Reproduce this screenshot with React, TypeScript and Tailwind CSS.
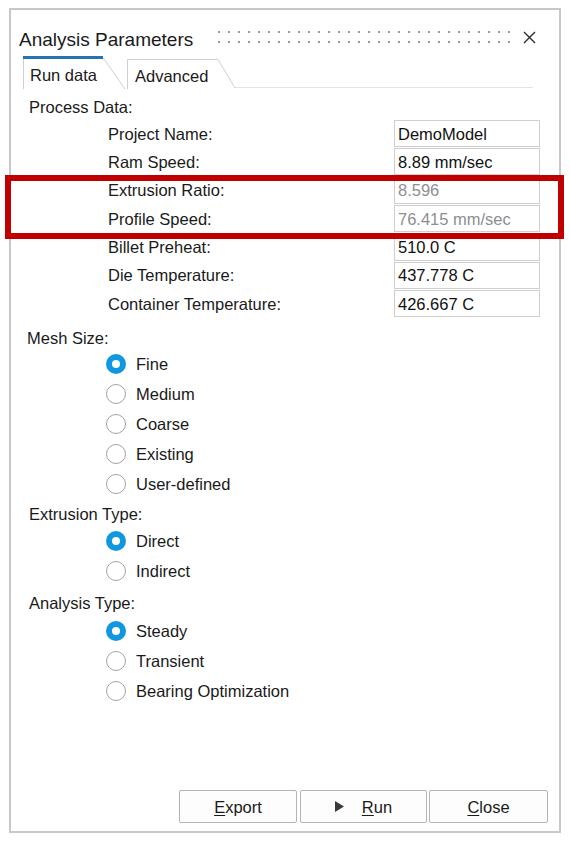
import React from "react";

const font = { fontFamily: '"Liberation Sans", Arial, sans-serif' };

function Radio({ label, checked }: { label: string; checked?: boolean }) {
  return (
    <div className="flex h-[30px] items-center pl-[95px]">
      {checked ? (
        <span className="flex h-[20px] w-[20px] items-center justify-center rounded-full bg-[#0f97df]">
          <span className="h-[8px] w-[8px] rounded-full bg-white" />
        </span>
      ) : (
        <span className="h-[20px] w-[20px] rounded-full border-[1.5px] border-[#a3a3a3] bg-white" />
      )}
      <span className="ml-[10px] text-[16.5px] leading-[20px] text-[#1a1a1a]">{label}</span>
    </div>
  );
}

function Field({ label, value, disabled }: { label: string; value: string; disabled?: boolean }) {
  return (
    <div className="flex h-[27px] items-center">
      <div className="w-[383px] pl-[97px] text-[16.5px] leading-[20px] text-[#1a1a1a]">{label}</div>
      <div
        className={
          "flex h-[27px] w-[146px] items-center border border-[#cfcfcf] bg-white pl-[3px] text-[16.5px] leading-[20px] " +
          (disabled ? "text-[#8e8e8e]" : "text-[#111111]")
        }
      >
        {value}
      </div>
    </div>
  );
}

export default function App() {
  const dots = Array.from({ length: 30 });
  return (
    <div className="relative h-[841px] w-[570px] bg-white pl-[9px] pt-[8px]" style={font}>
      <div className="flex h-[825px] w-[552px] flex-col border-2 border-[#c8c8c8] bg-white">
        {/* Title row */}
        <div className="mt-[18px] flex h-[24px] items-start">
          <div className="w-[207px] pl-[8px] text-[19px] leading-[24px] text-[#1a1a1a]">Analysis Parameters</div>
          <div className="mt-[3px] flex flex-col gap-[8px]">
            {[0, 1].map((r) => (
              <div key={r} className="flex gap-[8px]">
                {dots.map((_, i) => (
                  <span key={i} className="h-[2px] w-[2px] bg-[#9a9a9a]" />
                ))}
              </div>
            ))}
          </div>
          <svg className="ml-[13px] mt-[3px]" width="13" height="13" viewBox="0 0 13 13">
            <path d="M1 1 L12 12 M12 1 L1 12" stroke="#2a2a2a" strokeWidth="1.4" fill="none" />
          </svg>
        </div>

        {/* Tabs */}
        <div className="mt-[4px] flex h-[33px] items-end pl-[12px]">
          <div className="relative flex h-[33px] w-[102px] items-center pl-[7px] pt-[4px]">
            <svg className="absolute left-0 top-0" width="103" height="33" viewBox="0 0 103 33">
              <path d="M0.5 33 L0.5 1.5 L80 1.5 L102 33" fill="white" stroke="#cfcfcf" strokeWidth="1" />
              <path d="M0 1.5 L80 1.5" stroke="#2673b3" strokeWidth="3" />
            </svg>
            <span className="relative text-[16.5px] leading-[20px] text-[#1a1a1a]">Run data</span>
          </div>
          <div className="relative ml-[2px] flex h-[30px] w-[108px] items-center pl-[8px] pt-[4px]">
            <svg className="absolute left-0 top-0" width="110" height="30" viewBox="0 0 110 30">
              <path d="M0.5 30 L0.5 0.5 L91 0.5 L108 29" fill="white" stroke="#cfcfcf" strokeWidth="1" />
            </svg>
            <span className="relative text-[16.5px] leading-[20px] text-[#1a1a1a]">Advanced</span>
          </div>
          <div className="mb-[1px] h-[1px] w-[298px] bg-[#e3e3e3]" />
        </div>

        {/* Process data */}
        <div className="mt-[8px] h-[20px] pl-[18px] text-[16.5px] leading-[20px] text-[#1a1a1a]">Process Data:</div>
        <div className="mt-[3px] flex flex-col gap-[1.4px]">
          <Field label="Project Name:" value="DemoModel" />
          <Field label="Ram Speed:" value="8.89 mm/sec" />
          <Field label="Extrusion Ratio:" value="8.596" disabled />
          <Field label="Profile Speed:" value="76.415 mm/sec" disabled />
          <Field label="Billet Preheat:" value="510.0 C" />
          <Field label="Die Temperature:" value="437.778 C" />
          <Field label="Container Temperature:" value="426.667 C" />
        </div>

        <div className="mt-[11px] h-[20px] pl-[16px] text-[16.5px] leading-[20px] text-[#1a1a1a]">Mesh Size:</div>
        <div className="mt-[1px] flex flex-col">
          <Radio label="Fine" checked />
          <Radio label="Medium" />
          <Radio label="Coarse" />
          <Radio label="Existing" />
          <Radio label="User-defined" />
        </div>

        <div className="mt-[5px] h-[20px] pl-[18px] text-[16.5px] leading-[20px] text-[#1a1a1a]">Extrusion Type:</div>
        <div className="mt-[2px] flex flex-col">
          <Radio label="Direct" checked />
          <Radio label="Indirect" />
        </div>

        <div className="mt-[7px] h-[20px] pl-[18px] text-[16.5px] leading-[20px] text-[#1a1a1a]">Analysis Type:</div>
        <div className="mt-[3px] flex flex-col">
          <Radio label="Steady" checked />
          <Radio label="Transient" />
          <Radio label="Bearing Optimization" />
        </div>

        {/* Buttons */}
        <div className="mb-[8px] mt-auto flex justify-end pr-[11px]">
          <div className="flex h-[33px] w-[118px] items-center justify-center rounded-[2px] border border-[#b4b4b4] bg-[#fdfdfd] text-[16.5px] leading-[20px] text-[#1a1a1a]">
            <span><span className="underline underline-offset-[2px]">E</span>xport</span>
          </div>
          <div className="ml-[3px] flex h-[33px] w-[127px] items-center justify-center rounded-[2px] border border-[#b4b4b4] bg-[#fdfdfd] text-[16.5px] leading-[20px] text-[#1a1a1a]">
            <svg width="9" height="11" viewBox="0 0 9 11" className="mr-[18px]">
              <path d="M0 0 L9 5.5 L0 11 Z" fill="#3a3a3a" />
            </svg>
            <span><span className="underline underline-offset-[2px]">R</span>un</span>
          </div>
          <div className="ml-[2px] flex h-[33px] w-[119px] items-center justify-center rounded-[2px] border border-[#b4b4b4] bg-[#fdfdfd] text-[16.5px] leading-[20px] text-[#1a1a1a]">
            <span><span className="underline underline-offset-[2px]">C</span>lose</span>
          </div>
        </div>
      </div>

      {/* Red highlight annotation */}
      <div className="pointer-events-none absolute left-[5px] top-[175px] h-[64px] w-[559px] border-[6px] border-[#c00000]" />
    </div>
  );
}
